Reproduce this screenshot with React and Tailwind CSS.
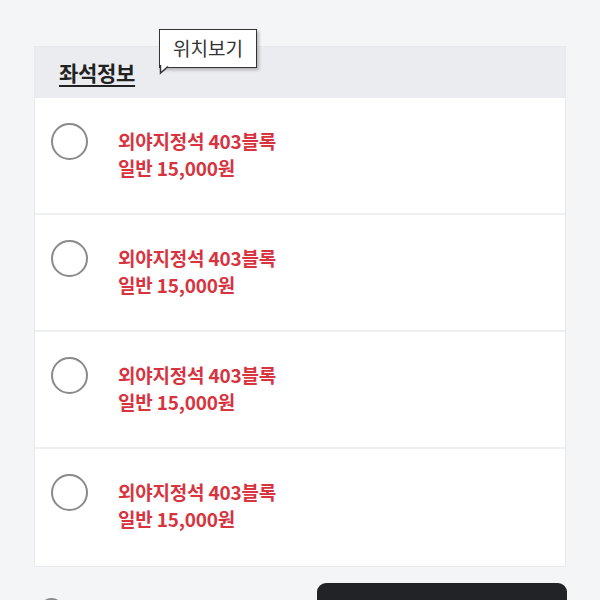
const seats = [
  { name: "외야지정석 403블록", price: "일반 15,000원" },
  { name: "외야지정석 403블록", price: "일반 15,000원" },
  { name: "외야지정석 403블록", price: "일반 15,000원" },
  { name: "외야지정석 403블록", price: "일반 15,000원" },
];

const font = { fontFamily: '"Noto Sans CJK KR", "Noto Sans", sans-serif' };

function SeatRow({ seat, last }) {
  return (
    <div className={`flex items-start h-[117px] pl-4 pt-[25px] ${last ? "" : "border-b-2 border-[#eeeff2]"}`}>
      <div className="w-[37px] h-[37px] rounded-full border-2 border-[#8a8a8a] shrink-0" />
      <div className="ml-[30px] mt-[4px] text-[19px] font-bold leading-[27px] text-[#d7343f] tracking-[-0.2px]">
        <div>{seat.name}</div>
        <div>{seat.price}</div>
      </div>
    </div>
  );
}

export default function App() {
  return (
    <div className="w-[600px] h-[600px] overflow-hidden bg-[#f4f5f7] relative" style={font}>
      <div className="h-[46px]" />

      {/* seat card */}
      <div className="ml-[34px] w-[532px] bg-white border border-[#e8e9ec]">
        <div className="h-[51px] bg-[#ebecef] flex items-center pl-6">
          <span className="text-[21px] font-bold text-[#222] underline underline-offset-[4px] decoration-[1.5px] tracking-[-0.3px]">
            좌석정보
          </span>
        </div>
        {seats.map((s, i) => (
          <SeatRow key={i} seat={s} last={i === seats.length - 1} />
        ))}
      </div>

      {/* tooltip */}
      <div className="absolute left-[159px] top-[29px]">
        <div className="relative w-[98px] h-[39px] bg-white border-[1.5px] border-[#333] shadow-[2px_2px_3px_rgba(0,0,0,0.25)] flex items-center justify-center text-[19px] text-[#333]">
          위치보기
        </div>
        <svg className="absolute left-[0px] top-[36px]" width="14" height="10" viewBox="0 0 14 10">
          <path d="M1.5 0 L1.5 8 L9 1.5" fill="white" stroke="#333" strokeWidth="1.5" strokeLinejoin="miter" />
        </svg>
      </div>

      {/* bottom bar */}
      <div className="flex items-start mt-[16px] pl-[39px]">
        <div className="mt-[15px] w-[25px] h-[25px] rounded-full border-2 border-[#8a8a8a]" />
        <div className="ml-auto mr-[33px] w-[250px] h-[60px] rounded-[9px] bg-[#222326]" />
      </div>
    </div>
  );
}
